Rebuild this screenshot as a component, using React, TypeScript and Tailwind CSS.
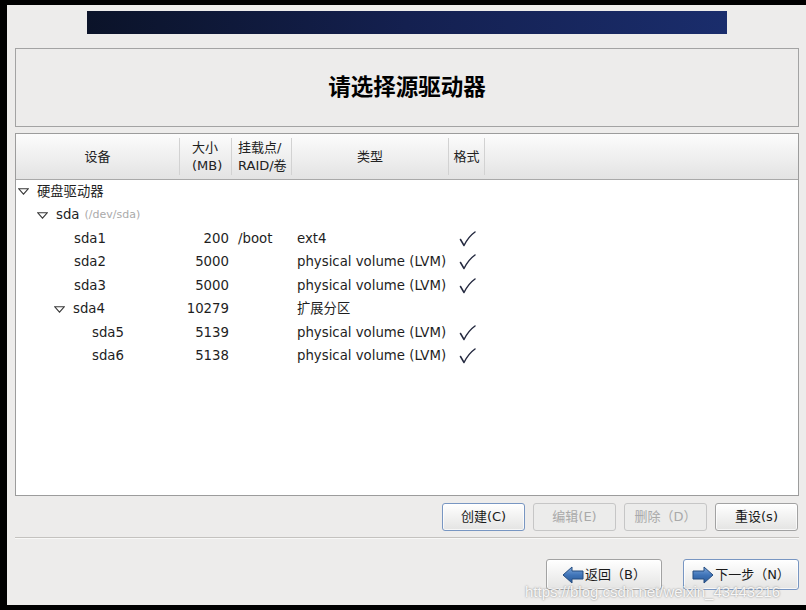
import React from 'react';

const font = "font-['DejaVu_Sans','Noto_Sans_CJK_SC',sans-serif]";

function Tri() {
  return (
    <svg width="11" height="7" viewBox="0 0 11 7" className="shrink-0">
      <polygon points="0.8,0.8 10.2,0.8 5.5,6.2" fill="white" stroke="#3a3a3a" strokeWidth="1.1" />
    </svg>
  );
}

function Check() {
  return (
    <svg width="17" height="16" viewBox="0 0 17 16">
      <path d="M1.5 8.5 L5 14.5 C8 8.5 11 4.5 16 1" fill="none" stroke="#252a40" strokeWidth="1.5" strokeLinecap="round" strokeLinejoin="round" />
    </svg>
  );
}

function Arrow({ dir }: { dir: 'left' | 'right' }) {
  const pts = dir === 'left' ? '1,9 10,1 10,5 21,5 21,13 10,13 10,17' : '21,9 12,1 12,5 1,5 1,13 12,13 12,17';
  return (
    <svg width="22" height="18" viewBox="0 0 22 18" className="shrink-0">
      <defs>
        <linearGradient id={`g-${dir}`} x1="0" y1="0" x2="0" y2="1">
          <stop offset="0" stopColor="#7fa9dc" />
          <stop offset="0.5" stopColor="#3f74b8" />
          <stop offset="1" stopColor="#2a5a98" />
        </linearGradient>
      </defs>
      <polygon points={pts} fill={`url(#g-${dir})`} stroke="#244c80" strokeWidth="1" strokeLinejoin="round" />
    </svg>
  );
}

type Row = { level: number; tri?: boolean; name: string; sub?: string; size?: string; mount?: string; type?: string; fmt?: boolean };

const rows: Row[] = [
  { level: 0, tri: true, name: '硬盘驱动器' },
  { level: 1, tri: true, name: 'sda', sub: '(/dev/sda)' },
  { level: 2, name: 'sda1', size: '200', mount: '/boot', type: 'ext4', fmt: true },
  { level: 2, name: 'sda2', size: '5000', type: 'physical volume (LVM)', fmt: true },
  { level: 2, name: 'sda3', size: '5000', type: 'physical volume (LVM)', fmt: true },
  { level: 2, tri: true, name: 'sda4', size: '10279', type: '扩展分区' },
  { level: 3, name: 'sda5', size: '5139', type: 'physical volume (LVM)', fmt: true },
  { level: 3, name: 'sda6', size: '5138', type: 'physical volume (LVM)', fmt: true },
];

const indent = ['pl-[2px]', 'pl-[21px]', 'pl-[38px]', 'pl-[56px]'];

function Btn({ children, disabled, focus, w }: { children: React.ReactNode; disabled?: boolean; focus?: boolean; w: string }) {
  const base = `${w} h-full rounded-[3px] border flex items-center justify-center text-[13px]`;
  if (disabled)
    return <div className={`${base} border-[#c6c6c6] bg-[#ececeb] text-[#a9a9a9]`}>{children}</div>;
  return (
    <div className={`${base} ${focus ? 'border-[#7896c2]' : 'border-[#a2a2a2]'} bg-linear-to-b from-[#ffffff] to-[#e4e4e3] text-[#1a1a1a] shadow-[inset_0_0_0_1px_rgba(255,255,255,0.7)]`}>
      {children}
    </div>
  );
}

export default function App() {
  return (
    <div className={`w-[806px] h-[610px] bg-black pt-[5px] pl-[7px] pb-[5px] overflow-hidden ${font}`}>
      <div className="relative h-full bg-[#edeceb] flex flex-col">
        <div className="mt-[6px] ml-[80px] w-[640px] h-[23px] bg-linear-to-r from-[#0b1329] via-[#142050] to-[#1a2d6c]" />

        <div className="mt-[14px] ml-[8px] mr-[7px] h-[79px] border border-[#a3a3a3] flex items-center justify-center text-[22.5px] font-bold text-black">
          请选择源驱动器
        </div>

        <div className="mt-[6px] ml-[8px] mr-[7px] h-[363px] border border-[#9c9c9c] bg-white flex flex-col">
          <div className="h-[46px] border-b border-[#a9a9a9] bg-linear-to-b from-[#fcfcfc] to-[#e3e3e3] flex text-[13px] text-[#222] leading-[18px]">
            <div className="w-[164px] my-[4px] border-r border-[#d2d2d2] flex items-center justify-center">设备</div>
            <div className="w-[52px] my-[4px] border-r border-[#d2d2d2] flex flex-col justify-center pl-[12px]">
              <span>大小</span>
              <span>(MB)</span>
            </div>
            <div className="w-[60px] my-[4px] border-r border-[#d2d2d2] flex flex-col justify-center pl-[6px]">
              <span>挂载点/</span>
              <span>RAID/卷</span>
            </div>
            <div className="w-[157px] my-[4px] border-r border-[#d2d2d2] flex items-center justify-center">类型</div>
            <div className="w-[36px] my-[4px] border-r border-[#d2d2d2] flex items-center justify-center">格式</div>
          </div>

          <div className="flex flex-col text-[13.3px] text-[#1e1e1e]">
            {rows.map((r, i) => (
              <div key={i} className="h-[23.5px] flex items-center">
                <div className={`w-[164px] flex items-center ${indent[r.level]}`}>
                  {r.tri ? (
                    <>
                      <Tri />
                      <span className="ml-[8px]">{r.name}</span>
                    </>
                  ) : (
                    <span className="ml-[20px]">{r.name}</span>
                  )}
                  {r.sub && <span className="ml-[5px] text-[11px] text-[#aaaaaa]">{r.sub}</span>}
                </div>
                <div className="w-[52px] text-right pr-[3px]">{r.size}</div>
                <div className="w-[60px] pl-[6px]">{r.mount}</div>
                <div className="w-[157px] pl-[5px] whitespace-nowrap">{r.type}</div>
                <div className="w-[36px] flex justify-center">{r.fmt && <Check />}</div>
              </div>
            ))}
          </div>
        </div>

        <div className="mt-[7px] h-[28px] flex justify-end gap-[8px] pr-[8px]">
          <Btn w="w-[83px]" focus>创建(C)</Btn>
          <Btn w="w-[83px]" disabled>编辑(E)</Btn>
          <Btn w="w-[83px]" disabled>删除（D）</Btn>
          <Btn w="w-[83px]">重设(s)</Btn>
        </div>

        <div className="mt-[6px] ml-[8px] mr-[7px] border-t border-[#c4c2bf] border-b border-b-[#f8f8f7]" />

        <div className="mt-[20px] h-[31px] flex justify-end gap-[21px] pr-[7px]">
          <Btn w="w-[116px]">
            <Arrow dir="left" />
            <span className="ml-[1px]">返回（B）</span>
          </Btn>
          <Btn w="w-[116px]" focus>
            <Arrow dir="right" />
            <span className="ml-[1px]">下一步（N）</span>
          </Btn>
        </div>

        <div className="absolute left-[518px] top-[576px] text-[15px] font-['Liberation_Sans',sans-serif] text-white/90 [text-shadow:0_0_2px_#7a7a7a] pointer-events-none whitespace-nowrap">
          https://blog.csdn.net/weixin_43443216
        </div>
      </div>
    </div>
  );
}
